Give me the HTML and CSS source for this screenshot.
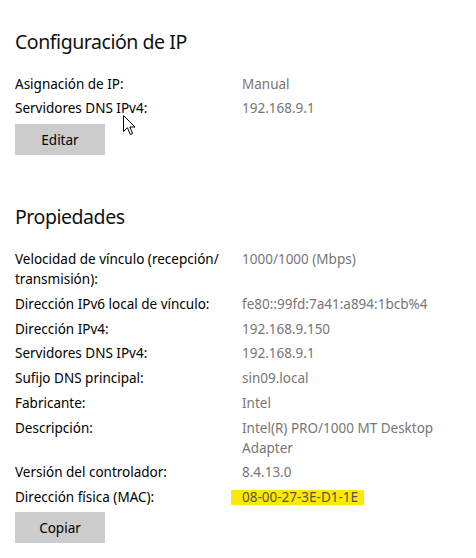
FILE: index.html
```html
<!DOCTYPE html>
<html lang="es">
<head>
<meta charset="utf-8">
<link rel="stylesheet" href="styles.css">
</head>
<body>
<div class="page">
  <section class="section">
    <h2 class="title">Configuración de IP</h2>
    <div class="props">
      <div class="label">Asignación de IP:</div><div class="value">Manual</div>
      <div class="label">Servidores DNS IPv4:</div><div class="value">192.168.9.1</div>
    </div>
    <button class="btn">Editar</button>
  </section>
  <section class="section second">
    <h2 class="title">Propiedades</h2>
    <div class="props wide">
      <div class="label">Velocidad de vínculo (recepción/ transmisión):</div><div class="value">1000/1000 (Mbps)</div>
      <div class="label">Dirección IPv6 local de vínculo:</div><div class="value">fe80::99fd:7a41:a894:1bcb%4</div>
      <div class="label">Dirección IPv4:</div><div class="value">192.168.9.150</div>
      <div class="label">Servidores DNS IPv4:</div><div class="value">192.168.9.1</div>
      <div class="label">Sufijo DNS principal:</div><div class="value">sin09.local</div>
      <div class="label">Fabricante:</div><div class="value">Intel</div>
      <div class="label">Descripción:</div><div class="value">Intel(R) PRO/1000 MT Desktop Adapter</div>
      <div class="label">Versión del controlador:</div><div class="value">8.4.13.0</div>
      <div class="label">Dirección física (MAC):</div><div class="value"><span class="mark">08-00-27-3E-D1-1E</span></div>
    </div>
    <button class="btn btn-tight">Copiar</button>
  </section>
</div>
<svg class="cursor" width="13" height="21" viewBox="0 0 13 21">
  <path d="M0.5 0.5 L0.5 16.5 L4.5 12.8 L7.3 19.5 L9.6 18.5 L6.9 12 L12 12 Z" fill="#fff" stroke="#000" stroke-width="1" stroke-linejoin="miter"/>
</svg>
</body>
</html>
```
FILE: styles.css
```css
html, body {
  margin: 0;
  padding: 0;
  background: #fff;
}
body {
  font-family: "Noto Sans", "Open Sans", sans-serif;
  color: #000;
  position: relative;
  width: 476px;
  height: 558px;
  overflow: hidden;
}
.page {
  padding: 28px 0 0 15px;
}
.section {
  display: flex;
  flex-direction: column;
  align-items: flex-start;
}
.second {
  margin-top: 48px;
}
.title {
  margin: 0;
  font-size: 19.5px;
  font-weight: 400;
  line-height: 28px;
  letter-spacing: -0.45px;
  color: #111;
}
.props {
  margin-top: 18px;
  display: grid;
  grid-template-columns: 227px 220px;
  row-gap: 4px;
  font-size: 13.5px;
  line-height: 20px;
}
.props.wide {
  row-gap: 4.75px;
}
.label {
  color: #000;
  padding-right: 12px;
}
.value {
  color: #767676;
}
.mark {
  display: inline-block;
  line-height: 15px;
  background: #ffe900;
  padding: 0 6px 0 11px;
  margin-left: -11px;
  color: #55553a;
}
.btn {
  margin-top: 6px;
  width: 90px;
  height: 31px;
  border: none;
  background: #cccccc;
  font-family: inherit;
  font-size: 13.5px;
  color: #000;
  padding: 0;
}
.btn-tight {
  margin-top: 5px;
}
.cursor {
  position: absolute;
  left: 123px;
  top: 115px;
}
```
